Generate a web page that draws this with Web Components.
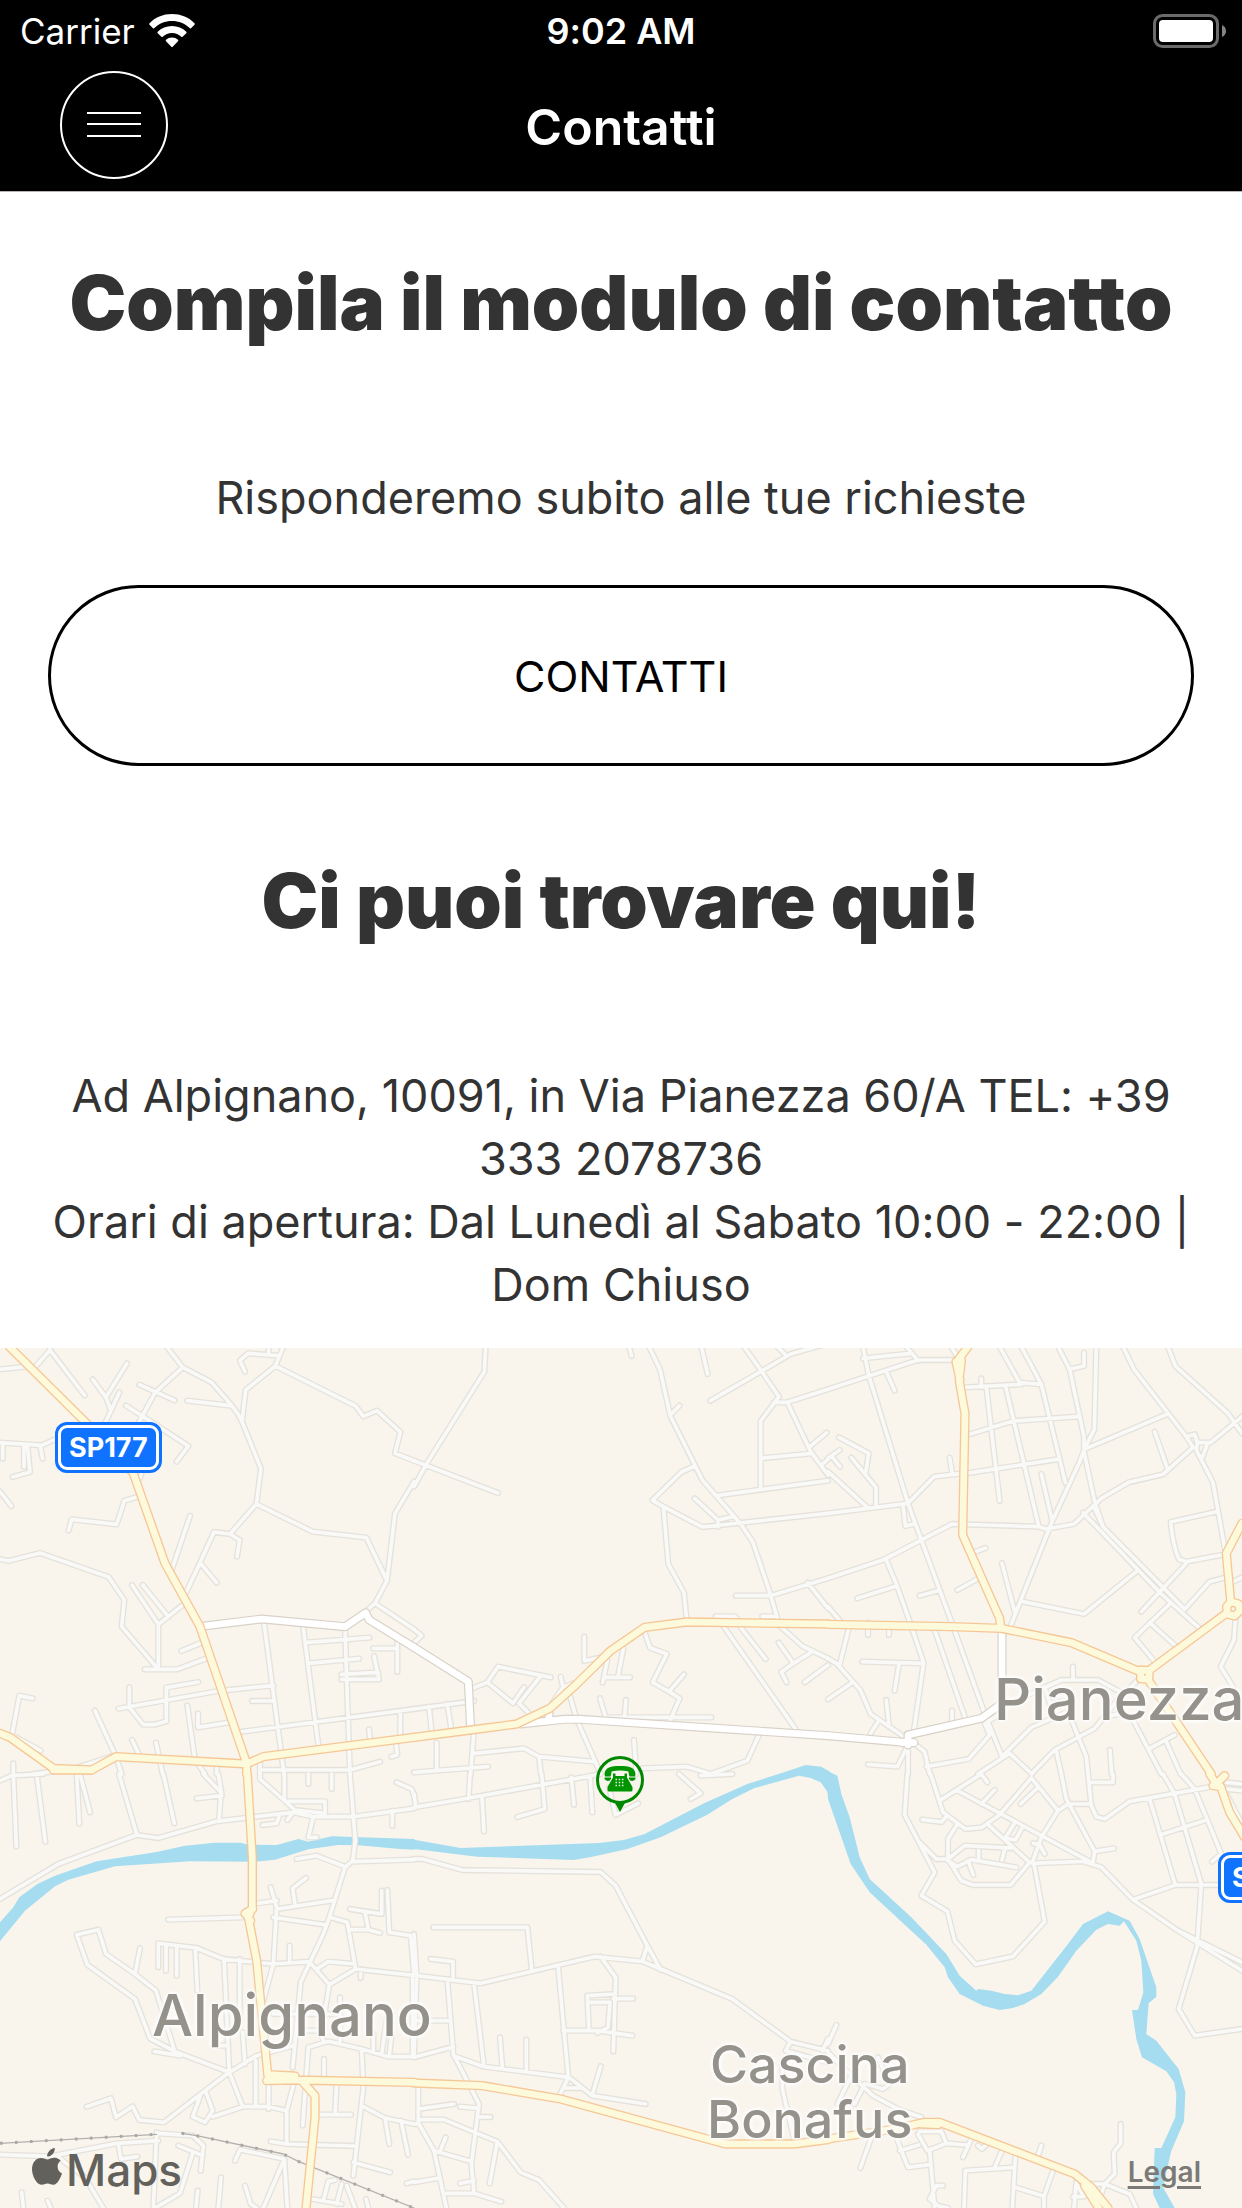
<!DOCTYPE html>
<html lang="it">
<head>
<meta charset="utf-8">
<meta name="viewport" content="width=device-width, initial-scale=1">
<title>Contatti</title>
<style>
  html, body { margin: 0; }
  body { background: #fff; font-family: Inter, "Liberation Sans", sans-serif; font-variant-ligatures: none; }
</style>
</head>
<body>
<contact-app></contact-app>

<template id="tpl-app">
  <style>
    :host { display: flex; flex-direction: column; min-height: 100vh; }
    main { display: flex; flex-direction: column; flex: 1; }
    .info { display: flex; flex-direction: column; padding: 56px 48px 32px; }
    area-map { flex: 1; }
  </style>
  <top-bar>Contatti</top-bar>
  <main>
    <div class="info">
      <info-block><span slot="title">Compila il modulo di contatto</span>Risponderemo subito alle tue richieste</info-block>
      <pill-button>CONTATTI</pill-button>
      <info-block><span slot="title">Ci puoi trovare qui!</span>Ad Alpignano, 10091, in Via Pianezza 60/A TEL: +39<br>333 2078736<br>Orari di apertura: Dal Lunedì al Sabato 10:00 - 22:00 |<br>Dom Chiuso</info-block>
    </div>
    <area-map></area-map>
  </main>
</template>

<template id="tpl-top">
  <style>
    :host { display: block; background: #000; color: #fff; border-bottom: 1px solid #b9b3b3; }
    .row { display: grid; grid-template-columns: 1fr auto 1fr; align-items: center; }
    .status { height: 62px; padding: 0 16px; font-size: 35px; line-height: 44px; }
    .status .l { display: flex; align-items: center; gap: 14px; padding-left: 4px; }
    .status .c { font-size: 36px; font-weight: 600; }
    .status .r { justify-self: end; }
    .nav { height: 129px; padding: 0 60px; }
    h1 { margin: 0; font-size: 50px; line-height: 60px; font-weight: 600; }
    button { width: 108px; height: 108px; margin-bottom: 4px; padding: 0; border: 2px solid #fff; border-radius: 50%; background: none; color: #fff; display: grid; place-items: center; }
    svg { display: block; }
  </style>
  <div class="row status">
    <div class="l"><span>Carrier</span>
      <svg width="46" height="34" viewBox="0 0 46 34" fill="#fff"><path d="M23 0C32 0 40 3.400 45.500 9.200Q46.200 10 45.500 10.700L42 14.200Q41.300 14.800 40.600 14.100C36 9.600 29.800 7 23 7S10 9.600 5.400 14.100Q4.700 14.800 4 14.200L.5 10.700Q-.2 10 .5 9.200C6 3.400 14 0 23 0Z"/><path d="M23 12C28.600 12 33.600 14.200 37.300 17.800Q38 18.500 37.300 19.200L33.600 22.800Q33 23.400 32.300 22.800C29.800 20.500 26.600 19.100 23 19.100S16.200 20.500 13.700 22.800Q13 23.400 12.400 22.800L8.700 19.200Q8 18.500 8.700 17.800C12.400 14.200 17.400 12 23 12Z"/><path d="M23 23.500Q26.500 23.500 29 25.800Q29.700 26.500 29 27.200L23.700 32.800Q23 33.500 22.300 32.800L17 27.200Q16.300 26.500 17 25.800Q19.500 23.500 23 23.500Z"/></svg>
    </div>
    <div class="c">9:02 AM</div>
    <svg class="r" width="73" height="34" viewBox="0 0 73 34"><rect x="1.500" y="1.500" width="63" height="31" rx="8" fill="none" stroke="#6b6b6b" stroke-width="3"/><rect x="6" y="6" width="54" height="22" rx="4" fill="#fff"/><path d="M69 11Q73 13 73 17T69 23Z" fill="#858585"/></svg>
  </div>
  <div class="row nav">
    <button aria-label="Menu"><svg width="54" height="26" viewBox="0 0 54 26" stroke="#fff" stroke-width="2"><path d="M0 1H54M0 12H54M0 24H54"/></svg></button>
    <h1><slot></slot></h1>
  </div>
</template>

<template id="tpl-block">
  <style>
    :host { display: block; text-align: center; color: #333; }
    h2 { margin: 0 0 110px; font-size: 76px; line-height: 108px; font-weight: 900; }
    p { margin: 0; font-size: 45px; line-height: 63px; }
  </style>
  <h2><slot name="title"></slot></h2>
  <p><slot></slot></p>
</template>

<template id="tpl-pill">
  <style>
    :host { display: block; margin: 56px 0 80px; }
    button { display: block; width: 100%; height: 181px; padding: 0; border: 3px solid #000; border-radius: 91px; background: #fff; color: #000; font: inherit; font-size: 43px; }
  </style>
  <button><slot></slot></button>
</template>

<template id="tpl-label">
  <style>
    :host { position: absolute; left: var(--x); top: var(--y); color: #95918b; font-size: 58px; line-height: 56px; font-weight: 500; text-align: center; white-space: nowrap;
      text-shadow: 0 0 3px #fff, 0 0 3px #fff, 0 0 4px #fff, 0 0 5px #fff, 0 0 6px #fff; }
    :host([size="small"]) { font-size: 52px; line-height: 55px; }
  </style>
  <slot></slot>
</template>

<template id="tpl-shield">
  <style>
    :host { position: absolute; left: var(--x); top: var(--y); box-sizing: border-box; padding: 3px; border-radius: 12px; background: #0f73ff; }
    span { display: block; box-sizing: border-box; height: 45px; padding: 0 8px; border: 3px solid #fff; border-radius: 9px; color: #fff; font-size: 27px; line-height: 39px; font-weight: 700; white-space: nowrap; }
  </style>
  <span><slot></slot></span>
</template>

<template id="tpl-map">
  <style>
    :host { display: block; position: relative; min-height: 860px; overflow: hidden; background: #f9f5ed; }
    .roads { position: absolute; inset: 0; width: 100%; height: 100%; }
    .roads path { fill: none; stroke-linejoin: round; stroke-linecap: round; }
    .roads .river { fill: #a6dcef; }
    .pin { position: absolute; left: 596px; top: 408px; }
    .brand { position: absolute; left: 32px; bottom: 10px; display: flex; align-items: center; gap: 4px; color: #62615c; font-size: 44px; line-height: 56px; font-weight: 500; }
    .brand svg { margin-bottom: 8px; }
    a { position: absolute; right: 41px; bottom: 20px; color: #7b7a76; font-size: 28px; line-height: 32px; font-weight: 600; text-underline-offset: 4px; text-decoration-thickness: 3px; }
  </style>
  <svg class="roads" viewBox="0 24 3726 2580" preserveAspectRatio="xMidYMin slice" aria-hidden="true"></svg>
  <map-label style="--x:994px;--y:323px">Pianezza</map-label>
  <map-label style="--x:152px;--y:639px">Alpignano</map-label>
  <map-label size="small" style="--x:707px;--y:689px">Cascina<br>Bonafus</map-label>
  <road-shield style="--x:55px;--y:74px">SP177</road-shield>
  <road-shield style="--x:1218px;--y:504px">SP177</road-shield>
  <svg class="pin" width="48" height="57" viewBox="0 0 48 57"><circle cx="24" cy="24" r="22.500" fill="none" stroke="#008700" stroke-width="3"/><path d="M18.500 46Q22 47 24 47T29.500 46L24 56Z" fill="#008700"/><path fill="#009500" d="M8.500 18C9 11.500 15 10 24 10S39 11.500 39.500 18L39 20.500H33.500Q32.500 18 32.500 15.500Q28 14.500 24 14.500T15.500 15.500Q15.500 18 14.500 20.500H9Z"/><path fill="#009500" d="M8.500 21.500H15V23Q14 25 12 25T8.500 23ZM33 21.500H39.500V23Q38 25 36 25T33 23ZM17 17.500H19.500V20H28.500V17.500H31V21.500L36.500 31V34Q36.500 35.500 35 35.500H13Q11.500 35.500 11.500 34V31L17 21.500Z"/><path stroke="#e8f4e3" stroke-width="1.500" stroke-dasharray="1.500 1.700" d="M19.500 23.500H29M19.500 26.500H29M19.500 29.500H29"/></svg>
  <div class="brand"><svg width="30" height="37" viewBox="0 0 30 37" fill="currentColor"><path d="M22.800 0C23 4.600 19.600 8.600 15.200 8.600C14.800 4.400 18.600.5 22.800 0ZM28.700 12.700C26.800 13.900 25.600 15.900 25.600 18.600C25.600 21.700 27.300 24.300 30 25.400C28.400 30.200 25.300 36.400 21.700 36.800C19.400 37 18.100 35.500 15.500 35.500C12.900 35.500 11.600 37 9.400 36.800C4.500 36.500 0 27.600 0 21.200C0 14.500 3.900 10 9 9.900C11.700 9.800 13.800 11.500 15.400 11.500C17 11.500 19.700 9.600 22.800 9.800C25.200 10 27.300 11 28.700 12.700Z"/></svg><span>Maps</span></div>
  <a href="#legal">Legal</a>
</template>

<script>
const tiles = [
  { x: 0, y: 0,
    minor: "M0 88L78 80M103 84L150 30L254 166M150 30V20M278 118L318 172L333 212L315 250M318 172L381 70M333 212L358 157M418 134L524 181M378 197L430 230L565 318L530 365M500 20L548 82L465 158L415 250M548 82L635 127L690 190L714 222L726 245M562 182L690 197M850 20L826 78L737 150L726 245L783 386L769 492L938 575L1099 593L1161 722L1125 790L1097 815M735 95L720 62L744 40L835 47M806 20V42M826 78L1067 198L1090 229L1131 212L1201 276L1185 340L1242 362M1242 425L1185 520L1161 722M1125 790L1242 868M769 492L690 582L642 576L600 668L555 765M690 582L719 600L711 650M600 668L650 728M570 528L515 690M0 308L125 316L170 296M8 312V356M72 316V380M82 316L90 396L38 411M120 316L128 356M0 455L34 498M425 395L420 415M420 468L373 482L350 553L215 538L206 571M0 657L25 663L120 639L326 711L373 780L365 860L475 988M396 735L475 853V988M428 735L505 830M475 853L555 790M434 988H532L625 953M544 933L610 906M388 1042V1102L430 1154H462L499 1144V1043L595 1026M356 1106L655 1053L820 1036M285 1112L348 1250L365 1302M396 1200L418 1245M468 1208L488 1302M562 1097L585 1260L615 1302M594 1120V1162L690 1147M98 1075L58 1067L36 1185L122 1232M348 1245L225 1285L100 1302M40 1270V1302M720 1176L1242 1107M756 1083H820M792 848L852 1302M909 858L955 1215M1035 868L1050 1302M915 908L1108 893M925 970L1077 956M1120 925H1192M1192 905V996M1122 948L1137 1018H1024M1024 1003L1135 997M1107 1168L1110 1195M1201 1115V1185M1188 1210L1192 1244L1174 1250M780 1260V1302M780 1290L1050 1290L1140 1265M650 1275V1302",
    white: "M612 858L785 837L1035 860L1097 818L1108 840L1242 922",
    main: "M28 20L260 250L400 400L495 670L600 860L740 1270V1302M0 1180L30 1192L160 1285L275 1290L348 1250L740 1272L790 1250L1242 1192" },
  { x: 1242, y: 0,
    minor: "M215 20L211 95L35 376L0 440M0 362L252 459M645 20L653 48M705 20L738 88L769 228L865 420L980 552L1016 605L1065 750L1091 838M769 225L796 197M862 20L881 102M889 182L1040 95L1130 42L1242 10M990 20L1040 90L1095 170L1040 243V445M1090 20L1118 48M1080 187H1120L1242 148M1120 187L1190 335L1242 405M1185 322L1238 278M1225 372L1242 358M1040 355L1195 340M912 466L1242 422M843 378L802 396L715 481L748 500L865 561L1242 520M842 475L912 540L955 530M912 540V560M748 500L763 672L810 758L818 840M966 767H1070L1242 715M1181 728L1242 805M1045 829H1085M905 838V829H962L970 838M928 858L1150 1175M980 862L1055 957M1100 860L1165 918L1242 955M1094 908L1138 970L1102 996L1118 1027M1138 970L1195 935M1172 1027L1242 975M0 868L23 887L0 908M175 1045L220 1027L252 980L410 1012M380 1008L315 1090L350 1125M220 1027L297 1090L330 1042M0 1107L180 1083M45 1100L53 1175M100 1092L112 1170M180 1170L170 1302M68 1208V1285M0 1297L222 1280M175 1241L330 1225L375 1250L540 1265M375 1250L381 1302M440 1010L447 1042L478 1030M447 1042L408 1100M467 1065L488 1138L560 1302M511 890V963L570 950M580 960L566 1028M570 1012H648M628 925L612 1010M690 870L708 923L758 942L716 1027L765 1055L810 1003M765 1055L797 1075L765 1150M558 1075L575 1132H892M636 1080L630 1150M660 1200L667 1302M685 1285L820 1280L890 1302L1000 1262L1035 1185",
    white: "M0 922L163 1025L170 1170M320 1152L450 1138H500L1242 1187M405 1110V1135",
    main: "M0 1192L170 1170L308 1152L408 1105L485 1035L590 932L692 862L818 846L1242 852" },
  { x: 2484, y: 0,
    minor: "M105 20L122 105L240 490L280 600L372 850L470 1120L522 1250M320 870L412 1135M0 148L270 60H385M105 55L250 40M235 20L270 62M175 95L200 152M370 20L385 45M410 142L580 133M460 115V142M515 20L575 128L640 133M580 20L640 133L712 428M475 142L515 483M533 140L632 558M425 283L555 243L748 230M690 20L725 88L768 290V335L800 485L825 560M725 88L768 78V38M805 20L799 268L768 330L755 365L672 545L545 865M768 328L1018 222M885 20L918 88L1075 290L1095 322L1005 403L902 427L820 475L738 552L655 567L632 560L372 552L280 600L165 660L0 715M980 275L1018 385M1075 290L1100 283L1108 308H1148L1242 230M1108 308L1105 330L1155 428L1192 635M1137 315L1122 355M1020 20L1042 78L1200 220L1242 280M415 400L695 357M365 353L372 395M405 400L318 410L240 490L0 520M640 402L672 540M225 495L232 558L258 552M33 292L122 340L113 400M70 353L144 442V500M0 355L35 330M12 350L36 380M0 395L118 502M438 637L472 624M388 750L450 716M275 767L330 752M522 670L560 815M580 784L768 822L925 695M765 518L1000 762L1115 865M800 505L825 560L1070 808M1070 808L1145 725L1195 712M940 815L1075 670M1165 515L1028 546Q1035 620 1053 658L1075 665L1190 643M1210 728L1242 712M1025 792L920 893L980 965M965 848L1040 915M1222 840L1218 900L1178 980L1215 1040M175 660L208 740L245 845L287 968L257 1175M88 775L205 738M0 800L38 845M120 848V885M183 865V885M62 865L35 975M0 955L25 970L97 1050L128 1122L235 1195M0 1078L72 1028M103 965L287 970M213 972L200 1052M175 1080L183 1160M150 1145L128 1180M120 1273L208 1280L240 1215V1302M258 1210L290 1235L305 1302M295 1280L422 1257L485 1185L470 1150L520 1120M372 1112V1145M600 1065L700 1020H810L885 1060L800 1165L680 1230L610 1302M735 980V1020M522 1250L610 1162L720 1115L775 1250L780 1302M650 1040L665 1090L720 1080M450 1302L545 1240L612 1302M685 1235L700 1302M846 1230L851 1302M830 1130L885 1120L915 1140L1000 1302M965 1225L1040 1185M1015 1205L1058 1302M930 1020L885 1065",
    white: "M522 870V1090L460 1135L240 1185V1208L0 1187M222 1208H258M240 1195V1215",
    main: "M420 20L390 60L395 130L411 220L404 585L515 835L518 862M384 65L396 120M400 60L396 100M0 853L370 860L520 865L730 908L935 995M965 990L1195 820M938 998V1016L962 1018L964 992L938 990M958 1016L1150 1302M1242 550L1195 640L1208 785L1196 800L1198 822L1220 828L1236 812L1232 792L1208 785" },
  { x: 0, y: 1302,
    minor: "M40 0L49 217M110 0L136 203M230 0L238 149M240 0L270 115M0 20L35 5L130 0M357 0L410 180M490 0L523 148M0 375L175 270L410 183L475 192L650 142L880 115L940 128H1062L1242 103M590 73L665 65M610 0L663 55L657 140M655 0L665 60M780 0V15L885 108L975 118V82H860M853 0V78M885 108L862 138M838 125L830 148L788 153M925 0V30M995 0V45M1050 0L1066 200L1058 260L1035 280L988 430L970 480L930 565L902 625L878 880M1190 25L1235 45L1242 65M940 128L925 190H950M1177 110V155M890 255L950 245L1035 278M1058 263L1242 257M812 340L830 400L820 570L790 680M772 388L830 380M832 405L995 380M918 312L878 343L885 392M820 430L980 453M505 437L730 430M1050 405L1145 420V350M1162 348L1168 475L1232 485L1242 600M1095 415L1105 465M1050 467H1105L1140 477M990 430L1042 445L1067 585M475 580V508L590 522L670 555L820 570L930 563M498 515V590M530 518V605M586 525L592 650M672 555L688 895M719 555V740M930 565L988 632L1067 585L1242 604M950 585L985 563L1065 570M869 515V562M988 632L975 710M1082 590V612M540 845L463 832M688 895L530 835L450 793L405 675L262 572L230 482L295 467L318 540L405 600L468 650L525 835M405 600L420 522M688 895L770 845L880 815M728 775L735 870M655 815H680M688 895L615 950L492 1045L418 1038L398 997L348 1030L333 973L260 998M600 968L578 1028L615 1045L638 1010L618 955M638 1028L728 998H805L860 1010V1108M688 895L728 998M767 860V998M806 930V1005M880 935L860 1010M908 1054L925 820L985 802L1085 825L1165 848H1242M1085 825L1090 940L1060 1205M972 855V905M1010 925L1005 1020M955 1022H1053M1090 998L1155 1032L1242 1050M1155 1032L1168 1110M1203 1040L1224 1142M812 1102L860 1110L1062 1116M1060 1165L1170 1195M0 1142L150 1147L350 1108L475 1100M355 1110L363 1155L412 1148M470 1075L460 1302M475 1078L578 1085L610 1115L602 1190M535 1115L608 1145M578 1138L540 1258L465 1302M705 1160L720 1127L853 1155L862 1302M853 1155L790 1302M663 1210L655 1302M593 1250L588 1302M735 1235L752 1290L770 1302M65 1255L70 1302M143 1280L152 1302M175 1150L255 1210L310 1302M935 1275L1025 1290M1005 1218L985 1222L970 1280M1025 1230L1010 1290M1040 1235L1065 1302M1098 1275L1105 1302M1220 1228L1242 1222M820 720H1020M1020 670V805M1160 735L1145 840M1120 780V830M900 770H960L970 800M1175 780L1168 845M1238 610V848",
    white: "",
    main: "M742 0L757 250V400L745 430L770 560L803 900M758 405L735 418L752 440M800 920L890 918L1242 925M803 902L885 906M905 920L945 965V1030L918 1302M160 -12L275 -12",
    rail: "M0 1108L470 1081M545 1078L590 1085L850 1140L895 1162L1242 1302",
    river: "M0 445L40 400L58 370L112 330L165 305L290 262L470 234L555 215L645 206H722L745 212L830 213L895 195L925 203L995 187L1244 195V227L1200 225L1075 214L1015 213L925 226L825 257L765 263L570 262L345 277L205 317L165 337L75 410L0 502Z" },
  { x: 1242, y: 1302,
    minor: "M168 0L164 75M0 100L165 72L385 32L560 0M0 60L5 95M383 0L392 105L310 129M204 70L210 172M472 10L480 92M528 5L535 115M585 40L605 123L672 88M795 0L860 58L830 75M860 5L955 0M0 255H25L145 288L560 294L605 335L700 515L740 588M700 515L685 562M58 460H340L354 593M50 555L117 563V615M0 480L8 605L200 628L540 548L685 562L740 585L955 675L1130 803L1242 830M8 605L0 850L118 818M100 615L118 840L195 990M180 628L210 878M118 845L210 878L465 910L535 965L695 990M0 740H110M258 790L265 882M337 797V890M432 575L463 910L438 962M455 942H500M560 877L535 962M560 548L605 610L598 832M605 660L520 665L525 770M598 674H657M525 685H588L582 760L550 777M448 770H550L655 785M13 940V1050M0 1050H15L60 1130L97 1302M13 1005L120 990M15 1037H90L250 1103L320 1195L375 1218L450 1302M250 1103L227 1228M138 998L195 1003M195 990L172 1170L180 1258M195 1029H230M60 1130L170 1162M78 1132L95 1090M0 1225L75 1212M88 1258H180L262 1283M138 1228L180 1220M1130 803L1115 830L1242 865M1105 860V945L1140 1095M1225 830L1242 795",
    white: "",
    main: "M0 927L205 935L440 975L935 1110H1140L1242 1097",
    river: "M0 197L140 222L555 207L630 198L692 180L870 88L1000 30L1110 -5L1175 -27L1222 -22L1250 -5V75L1238 50L1220 25L1190 12L1155 5L1020 43L955 75L880 122L740 190L640 225L535 248L480 258L190 248L0 225Z" },
  { x: 2484, y: 1302,
    minor: "M238 0L230 123L320 295L280 365L358 412L380 500L443 571L555 547L650 443L618 270M275 205L325 255H360L410 215L550 222M360 255V195L385 155M360 255L400 320L435 333H548L605 265L480 152M308 0L345 115L412 165L462 160L515 122L610 12L690 110L720 90H790M625 45L578 90M338 78L385 48L460 0M385 48L790 265M460 90L500 48M460 0L478 25M283 137L340 144L355 128M558 150L532 192L562 198L583 160M530 225L522 258M360 260L388 278L430 257L565 280M452 230V262M420 260L436 303M690 110L640 190L612 268L765 262L820 280L915 377L1050 470L1242 590M615 208L635 212L650 240M700 0L715 75L800 232L795 265M800 232L858 223M780 0L790 95L805 128L830 135L905 82L1140 40M785 25H855V0M1005 0L1040 60L1120 330L1107 520L1052 705L1100 785L1242 765M1060 0L1100 45L1180 240L1152 263M965 75L1042 333H1175M1042 333L915 377M1005 180L1135 138M1195 25L1242 30M1195 45L1242 50M1195 60L1242 150M1050 470L1242 565M0 810L25 753M0 835L70 905L28 990M110 930L80 990M70 905L135 965L210 1005L280 1030M115 930L165 945L185 930L150 850M130 1090L97 1182M205 1090L240 1180L305 1172M215 1130L272 1113M270 1080L298 1130L355 1108L340 1072H275M355 1108L415 1113M432 1090L405 1150M305 1130L320 1302M345 1235H325L305 1275L330 1295L360 1302M450 1115L462 1125L475 1112M640 1115L630 1145M522 1130L500 1180M408 1302L412 1190L560 1180M562 1150L553 1302M562 1240L648 1267L675 1190M648 1267V1302M745 1225L738 1302M745 1230L768 1268H735M878 1050V1108L857 1135L860 1200L830 1230L820 1260M785 1230H830L905 1260L925 1302",
    white: "",
    main: "M0 1095L200 1065L290 1045H335L740 1200L790 1240L840 1302M280 1050L330 1052M770 1235L812 1302M1145 0L1165 30L1190 5M1155 35L1178 38L1205 115L1250 190",
    river: "M-4 -10L28 5L40 60L65 130L95 250L125 315L250 430L355 540L395 605L445 650L450 645L490 650L530 660L570 664L610 650L720 510L765 450L840 412L905 440L935 495L985 640V668L962 688L955 780L985 800L1052 885L1072 955L1068 1042L1030 1130L1005 1240L1040 1302H995L975 1260L980 1122H1000L1042 1030L1045 960L1038 925L1015 892L942 850L925 795L912 708H930L946 655L940 560L925 500L888 442L875 455L840 450L805 467L745 530L690 608L640 660L590 690L555 702L515 708L465 695L395 660L360 610L350 580L295 512L125 355L68 270L0 75Z" }
];

/* Painted from the ground up: water, lanes, railway, streets, main roads. */
const layers = [
  ["river", { class: "river" }],
  ["minor", { stroke: "#e5e2db", "stroke-width": 19 }],
  ["minor", { stroke: "#f9f9f8", "stroke-width": 11 }],
  ["rail", { stroke: "#b3b1ad", "stroke-width": 4 }],
  ["rail", { stroke: "#aaa8a5", "stroke-width": 9, "stroke-dasharray": "8 37", style: "stroke-linecap:butt" }],
  ["white", { stroke: "#d8d1c7", "stroke-width": 27 }],
  ["white", { stroke: "#ffffff", "stroke-width": 20 }],
  ["main", { stroke: "#f6c796", "stroke-width": 28 }],
  ["main", { stroke: "#fdfadb", "stroke-width": 20 }]
];

class TemplateElement extends HTMLElement {
  constructor() {
    super();
    this.attachShadow({ mode: "open" })
      .append(document.getElementById(this.constructor.template).content.cloneNode(true));
  }
}

class AreaMap extends TemplateElement {
  static template = "tpl-map";
  constructor() {
    super();
    const ns = "http://www.w3.org/2000/svg";
    const svg = this.shadowRoot.querySelector(".roads");
    for (const [kind, attrs] of layers) {
      for (const tile of tiles) {
        if (!tile[kind]) continue;
        const path = document.createElementNS(ns, "path");
        path.setAttribute("d", tile[kind]);
        path.setAttribute("transform", `translate(${tile.x} ${tile.y})`);
        for (const name in attrs) path.setAttribute(name, attrs[name]);
        svg.append(path);
      }
    }
  }
}

customElements.define("map-label", class extends TemplateElement { static template = "tpl-label"; });
customElements.define("road-shield", class extends TemplateElement { static template = "tpl-shield"; });
customElements.define("area-map", AreaMap);
customElements.define("pill-button", class extends TemplateElement { static template = "tpl-pill"; });
customElements.define("info-block", class extends TemplateElement { static template = "tpl-block"; });
customElements.define("top-bar", class extends TemplateElement { static template = "tpl-top"; });
customElements.define("contact-app", class extends TemplateElement { static template = "tpl-app"; });
</script>
</body>
</html>
